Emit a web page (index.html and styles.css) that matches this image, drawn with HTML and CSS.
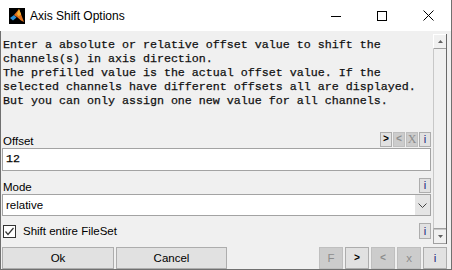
FILE: index.html
```html
<!DOCTYPE html>
<html lang="en">
	<head>
		<meta charset="utf-8" />
		<title>Axis Shift Options</title>
		<link rel="stylesheet" href="styles.css">
	</head>
	<body>
		<div class="window">
			<div class="titlebar">
				<svg class="app-icon" width="16" height="16" viewBox="0 0 16 16">
					<rect width="16" height="16" fill="#000" />
					<path d="M1 10 L5 7 L7.5 9.5 L4 12.5 Z" fill="#2b8fd6" />
					<path d="M5 7 L10 1 L15 14 L12 12.5 L8 9 Z" fill="#e0701c" />
					<path d="M10 1 L12.2 6.5 L9.6 8.2 L8 6 Z" fill="#f5b335" />
				</svg>
				<span class="title">Axis Shift Options</span>
				<div class="controls">
					<div class="ctl">
						<svg width="10" height="10" viewBox="0 0 10 10"><line x1="0" y1="5.5" x2="10" y2="5.5" stroke="#000" stroke-width="1" /></svg>
					</div>
					<div class="ctl">
						<svg width="10" height="10" viewBox="0 0 10 10"><rect x="0.5" y="0.5" width="9" height="9" fill="none" stroke="#000" stroke-width="1" /></svg>
					</div>
					<div class="ctl">
						<svg width="11" height="11" viewBox="0 0 11 11"><path d="M0.5 0.5 L10.5 10.5 M10.5 0.5 L0.5 10.5" stroke="#000" stroke-width="1" /></svg>
					</div>
				</div>
			</div>

			<div class="client">
				<div class="scroll">
					<div class="content">
						<div class="help">Enter a absolute or relative offset value to shift the
channels(s) in axis direction.
The prefilled value is the actual offset value. If the
selected channels have different offsets all are displayed.
But you can only assign one new value for all channels.</div>

						<div class="field-head">
							<span class="lbl">Offset</span>
							<div class="tools">
								<button class="mini arrow">&gt;</button>
								<button class="mini off arrow">&lt;</button>
								<button class="mini off cross">X</button>
								<button class="mini info">i</button>
							</div>
						</div>
						<div class="edit">12</div>

						<div class="field-head second">
							<span class="lbl">Mode</span>
							<div class="tools">
								<button class="mini info">i</button>
							</div>
						</div>
						<div class="select">
							<span class="select-value">relative</span>
							<span class="select-arrow">
								<svg width="9" height="5" viewBox="0 0 9 5"><polyline points="0.5,0.5 4.5,4.5 8.5,0.5" fill="none" stroke="#444" stroke-width="1" /></svg>
							</span>
						</div>

						<div class="check-row">
							<span class="checkbox">
								<svg width="11" height="11" viewBox="0 0 11 11"><polyline points="1.5,5.5 4,8.5 9.5,2" fill="none" stroke="#333" stroke-width="1.2" /></svg>
							</span>
							<span class="check-label">Shift entire FileSet</span>
							<button class="mini info">i</button>
						</div>
					</div>

					<div class="scrollbar">
						<div class="sb-btn">
							<svg width="5" height="3" viewBox="0 0 5 3"><polygon points="2.5,0 5,3 0,3" fill="#606060" /></svg>
						</div>
						<div class="sb-thumb"></div>
						<div class="sb-btn">
							<svg width="5" height="3" viewBox="0 0 5 3"><polygon points="0,0 5,0 2.5,3" fill="#606060" /></svg>
						</div>
					</div>
				</div>

				<div class="footer">
					<button class="btn ok">Ok</button>
					<button class="btn cancel">Cancel</button>
					<div class="nav">
						<button class="btn sq off">F</button>
						<button class="btn sq arrow">&gt;</button>
						<button class="btn sq off arrow">&lt;</button>
						<button class="btn sq off">x</button>
						<button class="btn sq info">i</button>
					</div>
				</div>
			</div>
		</div>
	</body>
</html>
```

FILE: styles.css
```css
body {
	margin: 0;
	background: #fff;
	font-family: "Liberation Sans", Arial, sans-serif;
	font-size: 11.5px;
	color: #000;
}
button {
	font-family: "Liberation Sans", Arial, sans-serif;
	margin: 0;
	padding: 0;
	color: #000;
}

.window {
	width: 452px;
	height: 270px;
	box-sizing: border-box;
	border-right: 1px solid #707070;
	display: flex;
	flex-direction: column;
}

/* title bar */
.titlebar {
	flex: none;
	height: 31px;
	background: #fff;
	display: flex;
	align-items: center;
}
.app-icon {
	margin-left: 9px;
}
.title {
	margin-left: 5px;
	font-size: 12px;
}
.controls {
	margin-left: auto;
	display: flex;
	height: 100%;
}
.ctl {
	width: 46px;
	display: flex;
	align-items: center;
	justify-content: center;
}

/* client area */
.client {
	flex: 1;
	background: #f0f0f0;
	border-left: 1px solid #707070;
	border-bottom: 1px solid #707070;
	display: flex;
	flex-direction: column;
}
.scroll {
	margin-top: 3px;
	height: 210px;
	width: 446px;
	display: flex;
}
.content {
	width: 432px;
	padding-top: 4px;
	box-sizing: border-box;
	display: flex;
	flex-direction: column;
}
.help {
	margin-left: 2px;
	height: 70px;
	font-family: "Liberation Mono", "Courier New", monospace;
	font-size: 11.67px;
	line-height: 14px;
	white-space: pre;
	color: #111;
	-webkit-text-stroke: 0.25px #111;
}

.field-head {
	margin-top: 24px;
	height: 15px;
	padding: 0 2px 0 2px;
	display: flex;
	align-items: center;
	justify-content: space-between;
}
.field-head.second {
	margin-top: 7px;
}
.lbl {
	padding-top: 2px;
}
.tools {
	display: flex;
	gap: 1px;
}
.mini {
	width: 12px;
	height: 15px;
	box-sizing: border-box;
	border: 1px solid #adadad;
	background: #e1e1e1;
	font-size: 11px;
	line-height: 13px;
	text-align: center;
}
.mini.off {
	background: #cccccc;
	border-color: #bfbfbf;
	color: #8c8c8c;
}
.mini.arrow {
	font-family: "Liberation Mono", monospace;
	font-size: 10px;
	font-weight: bold;
}
.mini.cross {
	font-family: "Liberation Serif", serif;
	font-size: 12px;
}
.info {
	color: #1b1b7a;
}

.edit {
	margin: 1px 2px 0 1px;
	height: 23px;
	box-sizing: border-box;
	border: 1px solid #a3a3a3;
	background: #fff;
	padding-left: 3px;
	font-family: "Liberation Mono", "Courier New", monospace;
	font-size: 11.67px;
	line-height: 21px;
	-webkit-text-stroke: 0.25px #111;
}

.select {
	margin: 1px 2px 0 1px;
	height: 22px;
	box-sizing: border-box;
	border: 1px solid #a3a3a3;
	background: #fff;
	display: flex;
}
.select-value {
	flex: 1;
	padding-left: 3px;
	line-height: 20px;
}
.select-arrow {
	width: 15px;
	background: #e5e5e5;
	display: flex;
	align-items: center;
	justify-content: center;
}

.check-row {
	margin-top: 7px;
	height: 16px;
	padding: 0 2px 0 2px;
	display: flex;
	align-items: center;
}
.checkbox {
	width: 13px;
	height: 13px;
	box-sizing: border-box;
	border: 1px solid #333;
	background: #fff;
	display: flex;
	align-items: center;
	justify-content: center;
}
.check-label {
	margin-left: 7px;
	flex: 1;
}
.check-row .mini {
	height: 16px;
}

/* scroll bar */
.scrollbar {
	width: 14px;
	box-sizing: border-box;
	border-right: 1px solid #696969;
	display: flex;
	flex-direction: column;
}
.sb-btn {
	height: 15px;
	box-sizing: border-box;
	border-top: 1px solid #fff;
	border-left: 1px solid #fff;
	border-bottom: 1px solid #a0a0a0;
	display: flex;
	align-items: center;
	justify-content: center;
}
.sb-btn:last-child {
	border-left-color: #a0a0a0;
	border-top-color: #c8c8c8;
}
.sb-thumb {
	flex: 1;
	border-left: 1px solid #c8c8c8;
	border-bottom: 1px solid #a0a0a0;
}

/* bottom buttons */
.footer {
	margin-top: 3px;
	height: 22px;
	padding: 0 4px 0 1px;
	display: flex;
}
.btn {
	height: 22px;
	box-sizing: border-box;
	border: 1px solid #adadad;
	background: #e1e1e1;
	font-size: 11.5px;
	text-align: center;
}
.btn.ok {
	width: 112px;
}
.btn.cancel {
	width: 111px;
	margin-left: 2px;
}
.nav {
	margin-left: auto;
	display: flex;
	gap: 2px;
}
.btn.sq {
	width: 24px;
}
.btn.off {
	background: #cccccc;
	border-color: #bfbfbf;
	color: #8c8c8c;
}
.btn.arrow {
	font-family: "Liberation Mono", monospace;
	font-size: 10px;
	font-weight: bold;
}
```
